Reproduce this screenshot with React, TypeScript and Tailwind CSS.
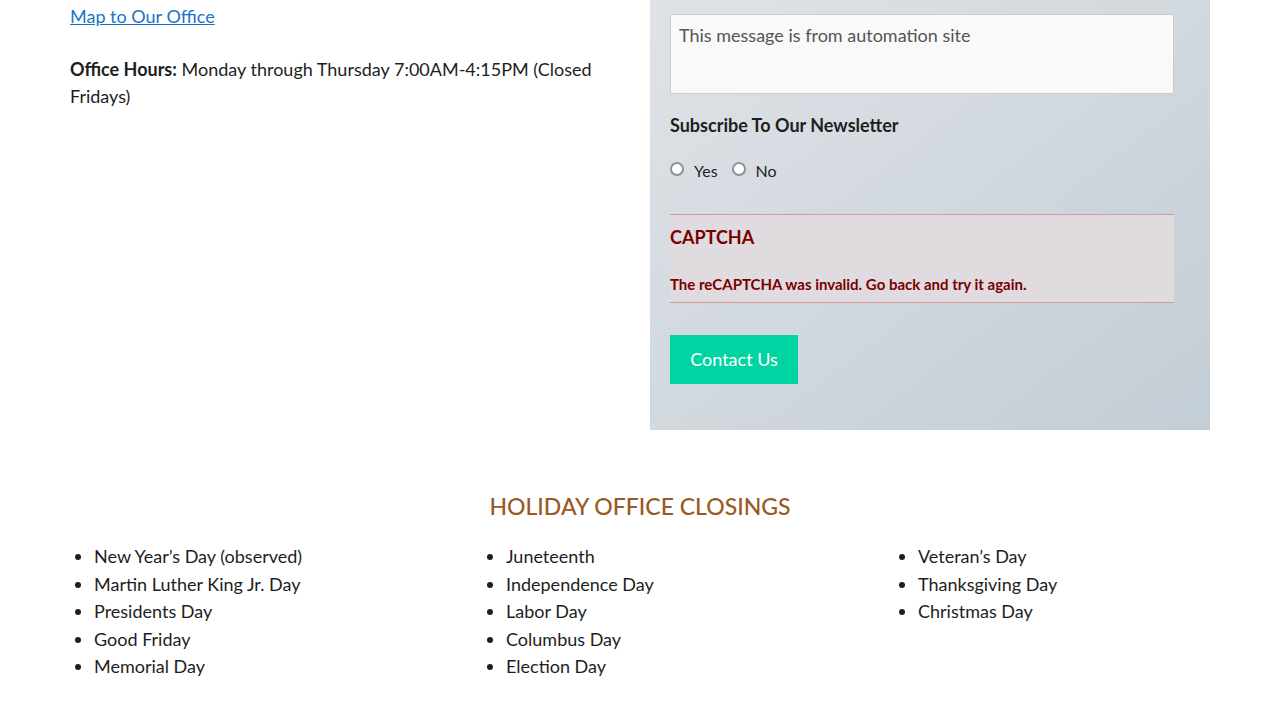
import React from "react";

const col1 = ["New Year’s Day (observed)", "Martin Luther King Jr. Day", "Presidents Day", "Good Friday", "Memorial Day"];
const col2 = ["Juneteenth", "Independence Day", "Labor Day", "Columbus Day", "Election Day"];
const col3 = ["Veteran’s Day", "Thanksgiving Day", "Christmas Day"];

function HolidayList({ items }: { items: string[] }) {
  return (
    <ul className="list-disc pl-6 text-[18px] leading-[27.5px] text-[#1e1e1e]">
      {items.map((h) => (
        <li key={h}>{h}</li>
      ))}
    </ul>
  );
}

export default function App() {
  return (
    <div className="w-[1280px] bg-white font-['Lato','Open_Sans',sans-serif] text-[#1e1e1e]">
      {/* contact info + form */}
      <div className="px-[70px] flex gap-[30px]">
        <div className="w-[550px] pt-[3px]">
          <a href="#" className="text-[18px] leading-[26px] text-[#1a73c8] underline">Map to Our Office</a>
          <p className="mt-[27px] text-[18px] leading-[27px]">
            <b className="font-bold">Office Hours:</b> Monday through Thursday 7:00AM-4:15PM (Closed Fridays)
          </p>
        </div>

        <div className="w-[560px] h-[430px] bg-gradient-to-br from-[#dfe3e7] to-[#c3cdd5] pt-[14px] pl-5">
          <textarea
            className="block w-[504px] h-[80px] bg-[#f9f9f9] border border-[#cccccc] px-[8px] py-[7px] text-[18px] text-[#555] resize-none outline-none"
            defaultValue="This message is from automation site"
          />
          <h3 className="mt-[19px] text-[18px] font-bold leading-[24px] text-[#1e1e1e]">Subscribe To Our Newsletter</h3>
          <div className="mt-[20px] flex items-center text-[16px] leading-[20px]">
            <label className="flex items-center gap-[10px] mr-[14px]">
              <input type="radio" name="news" className="appearance-none w-[14px] h-[14px] m-0 rounded-full border-2 border-[#8f8f9d] bg-white" />
              <span className="mt-[4px]">Yes</span>
            </label>
            <label className="flex items-center gap-[10px]">
              <input type="radio" name="news" className="appearance-none w-[14px] h-[14px] m-0 rounded-full border-2 border-[#8f8f9d] bg-white" />
              <span className="mt-[4px]">No</span>
            </label>
          </div>
          <div className="mt-[33px] w-[504px] h-[89px] border-y border-[#d39a9a] bg-[#e0dbdf] text-[#7a0000] font-bold">
            <div className="pt-[11px] text-[18px] leading-[22px]">CAPTCHA</div>
            <div className="mt-[26px] text-[15px] leading-[20px]">The reCAPTCHA was invalid. Go back and try it again.</div>
          </div>
          <button className="mt-[32px] w-[128px] h-[49px] bg-[#00d4a3] text-white text-[18px]">Contact Us</button>
        </div>
      </div>

      {/* holidays */}
      <div className="px-[70px] pt-[60px] pb-[40px]">
        <h2 className="text-center text-[23px] leading-[32px] font-medium text-[#9a5a25]">HOLIDAY OFFICE CLOSINGS</h2>
        <div className="mt-[21px] grid grid-cols-[412px_412px_1fr]">
          <HolidayList items={col1} />
          <HolidayList items={col2} />
          <HolidayList items={col3} />
        </div>
      </div>
    </div>
  );
}
